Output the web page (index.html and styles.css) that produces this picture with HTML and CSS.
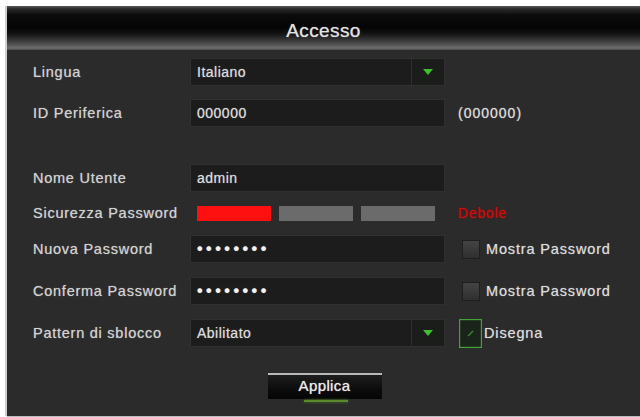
FILE: index.html
```html
<!DOCTYPE html>
<html lang="it">
<head>
<meta charset="utf-8">
<title>Accesso</title>
<link rel="stylesheet" href="styles.css">
</head>
<body>
<div class="panel">
  <div class="header">Accesso</div>
  <div class="form">
    <div class="row r1">
      <div class="label">Lingua</div>
      <div class="field select"><span class="val">Italiano</span><span class="arrow"><span class="tri"></span></span></div>
    </div>
    <div class="row r2">
      <div class="label">ID Periferica</div>
      <div class="field"><span class="val">000000</span></div>
      <div class="extra">(000000)</div>
    </div>
    <div class="row r3">
      <div class="label">Nome Utente</div>
      <div class="field"><span class="val">admin</span></div>
    </div>
    <div class="row r4">
      <div class="label">Sicurezza Password</div>
      <div class="bars"><span class="bar red"></span><span class="bar"></span><span class="bar"></span></div>
      <div class="extra weak">Debole</div>
    </div>
    <div class="row r5">
      <div class="label">Nuova Password</div>
      <div class="field"><span class="val dots">••••••••</span></div>
      <div class="check"><span class="box"></span><span>Mostra Password</span></div>
    </div>
    <div class="row r6">
      <div class="label">Conferma Password</div>
      <div class="field"><span class="val dots">••••••••</span></div>
      <div class="check"><span class="box"></span><span>Mostra Password</span></div>
    </div>
    <div class="row r7">
      <div class="label">Pattern di sblocco</div>
      <div class="field select"><span class="val">Abilitato</span><span class="arrow"><span class="tri"></span></span></div>
      <div class="check draw"><span class="gbox"><svg width="23" height="29" viewBox="0 0 23 29"><rect x="0.5" y="0.5" width="22" height="28" fill="#1b241a" stroke="#3fa336" stroke-width="1.4"/><line x1="9" y1="17" x2="14" y2="12" stroke="#3a8a32" stroke-width="1.3"/></svg></span><span>Disegna</span></div>
    </div>
    <div class="actions">
      <div class="btn">Applica</div>
    </div>
  </div>
</div>
</body>
</html>
```
FILE: styles.css
```css
* { box-sizing: border-box; }
html, body { margin: 0; padding: 0; }
body {
  background: #ffffff;
  width: 640px;
  height: 417px;
  overflow: hidden;
  font-family: "Liberation Sans", Arial, sans-serif;
}
.panel {
  margin: 6px 0 0 7px;
  width: 633px;
  height: 410px;
  background: #2b2b2b;
  box-shadow: -2px 0 0 #cfcfcf, 0 1px 0 #bdbdbd;
  display: flex;
  flex-direction: column;
}
.header {
  height: 44px;
  background: linear-gradient(to bottom, #5a5a5a 0px, #2a2a2a 3px, #0b0b0b 9px, #050505 22px, #141414 28px, #3c3c3c 35px, #5c5c5c 40px, #6e6e6e 42px, #4a4a4a 44px);
  color: #e2e2e2;
  font-size: 19px;
  text-align: center;
  line-height: 50px;
  letter-spacing: 0.4px;
  text-shadow: 0 0 1px #aaa;
}
.form {
  display: flex;
  flex-direction: column;
  padding-left: 26px;
}
.row {
  display: flex;
  align-items: center;
  height: 28px;
}
.r1 { margin-top: 8px; }
.r2 { margin-top: 13px; }
.r3 { margin-top: 37px; }
.r4 { margin-top: 7px; }
.r5 { margin-top: 8px; }
.r6 { margin-top: 14px; }
.r7 { margin-top: 14px; }
.label {
  width: 157px;
  color: #d2d2d2;
  font-size: 14.5px;
  letter-spacing: 0.75px;
  text-shadow: 0 0 1px #999;
}
.field {
  width: 255px;
  height: 28px;
  background: #1c1c1c;
  border: 1px solid #303030;
  display: flex;
  align-items: center;
  padding-left: 6px;
  color: #dcdcdc;
  font-size: 14px;
  letter-spacing: 0.5px;
  text-shadow: 0 0 1px #999;
}
.val { flex: 1; }
.dots {
  font-size: 16px;
  letter-spacing: 3.5px;
  font-weight: bold;
  color: #f2f2f2;
}
.select .arrow {
  width: 33px;
  height: 100%;
  border-left: 1px solid #2e2e2e;
  background: #1a1d1a;
  display: flex;
  align-items: center;
  justify-content: center;
}
.tri {
  width: 0;
  height: 0;
  border-left: 5px solid transparent;
  border-right: 5px solid transparent;
  border-top: 6px solid #3fc12f;
}
.extra {
  margin-left: 13px;
  color: #dedede;
  font-size: 14px;
  letter-spacing: 1px;
  text-shadow: 0 0 1px #999;
}
.weak {
  color: #c81212;
  font-size: 14px;
  letter-spacing: 0.8px;
  text-shadow: 0 0 2px #a00;
}
.bars {
  width: 255px;
  display: flex;
  gap: 8px;
  padding-left: 7px;
}
.bar {
  width: 74px;
  height: 15px;
  background: #6b6b6b;
}
.bar.red { background: #ff1010; }
.check {
  display: flex;
  align-items: center;
  margin-left: 17px;
  color: #dcdcdc;
  font-size: 14.5px;
  letter-spacing: 0.85px;
  text-shadow: 0 0 1px #999;
}
.box {
  width: 18px;
  height: 19px;
  background: linear-gradient(to bottom, #444 0, #2f2f2f 100%);
  border: 1px solid #1e1e1e;
  margin-right: 6px;
}
.draw { margin-left: 14px; }
.gbox {
  display: flex;
  width: 23px;
  height: 29px;
  margin-right: 2px;
}
.actions {
  display: flex;
  justify-content: center;
  margin-top: 26px;
  padding-right: 26px;
}
.btn {
  position: relative;
  width: 114px;
  height: 26px;
  background: linear-gradient(to bottom, #1e1e1e 0, #0c0c0c 60%, #050505 100%);
  border-top: 2px solid #b9b9b9;
  color: #ececec;
  font-size: 15px;
  text-align: center;
  line-height: 22px;
  margin-left: 2px;
  letter-spacing: 0.4px;
  text-shadow: 0 0 1px #bbb;
}
.btn::after {
  content: "";
  position: absolute;
  left: 36px;
  width: 44px;
  bottom: -3px;
  height: 2px;
  background: #5a8a2c;
  box-shadow: 0 0 3px #4a7a24;
}
```
